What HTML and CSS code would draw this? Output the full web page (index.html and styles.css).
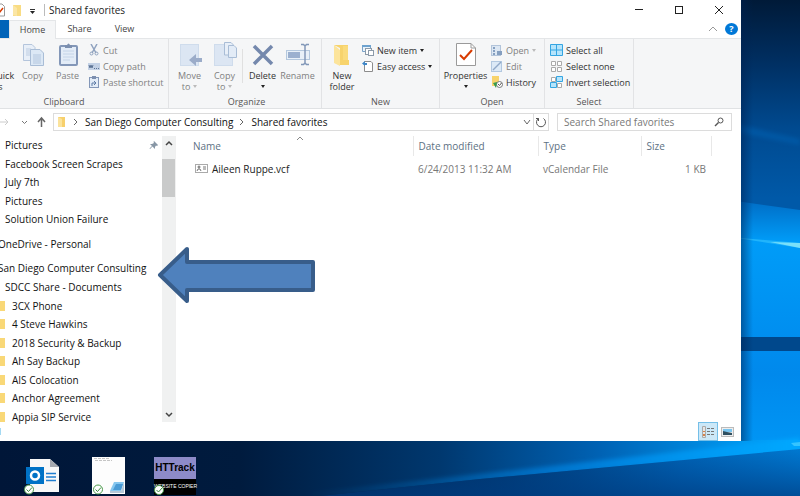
FILE: index.html
```html
<!DOCTYPE html>
<html lang="en">
<head>
<meta charset="utf-8">
<title>Shared favorites</title>
<link rel="stylesheet" href="styles.css">
</head>
<body>
<svg class="wallpaper" viewBox="0 0 800 496" preserveAspectRatio="none" aria-hidden="true">
  <defs>
    <linearGradient id="sky" x1="0" y1="0" x2="0" y2="1">
      <stop offset="0" stop-color="#001a38"/><stop offset=".12" stop-color="#002e60"/>
      <stop offset=".26" stop-color="#004a90"/><stop offset=".4" stop-color="#0059a8"/>
      <stop offset="1" stop-color="#0059a8"/>
    </linearGradient>
    <linearGradient id="glow" x1="0" y1="0" x2="0" y2="1">
      <stop offset="0" stop-color="#0068c0"/><stop offset=".18" stop-color="#009cf8"/>
      <stop offset=".7" stop-color="#0089ec"/><stop offset="1" stop-color="#0096f5"/>
    </linearGradient>
    <linearGradient id="floor" x1="0" y1="0" x2="1" y2="0">
      <stop offset="0" stop-color="#001638"/><stop offset=".3" stop-color="#001b3e"/>
      <stop offset=".55" stop-color="#00386f"/><stop offset=".75" stop-color="#0062b4"/>
      <stop offset=".93" stop-color="#0098f0"/><stop offset="1" stop-color="#00a2ff"/>
    </linearGradient>
    <linearGradient id="under" x1="320" y1="0" x2="800" y2="0" gradientUnits="userSpaceOnUse">
      <stop offset="0" stop-color="#001c40"/><stop offset=".4" stop-color="#003a74"/>
      <stop offset=".75" stop-color="#0062b4"/><stop offset="1" stop-color="#0078d0"/>
    </linearGradient>
    <linearGradient id="beam" x1="300" y1="0" x2="800" y2="0" gradientUnits="userSpaceOnUse">
      <stop offset="0" stop-color="#0078d0" stop-opacity="0"/><stop offset=".5" stop-color="#0088e8" stop-opacity=".6"/>
      <stop offset="1" stop-color="#00a8ff"/>
    </linearGradient>
    <linearGradient id="deep" x1="0" y1="450" x2="0" y2="496" gradientUnits="userSpaceOnUse">
      <stop offset="0" stop-color="#00408a" stop-opacity="0"/><stop offset="1" stop-color="#003c80" stop-opacity=".7"/>
    </linearGradient>
    <linearGradient id="edge" x1="0" y1="0" x2="1" y2="0">
      <stop offset="0" stop-color="#002050" stop-opacity=".5"/><stop offset="1" stop-color="#002050" stop-opacity="0"/>
    </linearGradient>
    <filter id="soft"><feGaussianBlur stdDeviation="2"/></filter>
  </defs>
  <rect width="800" height="496" fill="url(#sky)"/>
  <path d="M700 116L800 139V145L700 125Z" fill="#0069bd" opacity=".4" filter="url(#soft)"/>
  <path d="M700 196L800 210V450H700Z" fill="url(#glow)"/>
  <path d="M730 237L800 243V248Z" fill="#20b4fc"/>
  <path d="M770 242L800 243V248Z" fill="#79e0fa"/>
  <rect x="700" y="337" width="100" height="14" fill="#00488c"/>
  <rect y="440" width="800" height="56" fill="url(#floor)"/>
  <path d="M300 494L800 438V452L320 496Z" fill="url(#beam)" filter="url(#soft)"/>
  <path d="M320 496L480 479L800 449V496Z" fill="url(#under)"/>
  <path d="M320 496L480 479L800 449V496Z" fill="url(#deep)"/>
  <path d="M791 443L800 442V446H794Z" fill="#35c4ff"/>
  <rect x="741" width="12" height="441" fill="url(#edge)"/>
</svg>

<main class="desktop">
<section class="window">
  <header class="titlebar">
    <svg width="40" height="14" viewBox="0 0 40 14" aria-hidden="true">
      <path d="M-4 1H2L4.500 3.500V13H-4" fill="#fff" stroke="#999"/><path d="M-3 8L-1 10L3 5" fill="none" stroke="#d83b01" stroke-width="1.500"/>
      <path d="M13 2H21V13H13Z" fill="#f9dc83"/><path d="M13 2L17 5V13L13 12Z" fill="#fbe6a5"/>
      <path d="M30 6.500H35" stroke="#333"/><path d="M30 8H35L32.500 11Z" fill="#222"/>
    </svg>
    <h1>Shared favorites</h1>
    <div class="controls">
      <button aria-label="Minimize"><svg width="10" height="10"><path d="M1 4.500H9" stroke="#222"/></svg></button>
      <button aria-label="Maximize"><svg width="10" height="10"><rect x="1.500" y="1.500" width="7" height="7" fill="none" stroke="#222"/></svg></button>
      <button aria-label="Close"><svg width="10" height="10"><path d="M1 1L9 9M9 1L1 9" stroke="#222"/></svg></button>
    </div>
  </header>

  <nav class="tabs">
    <button class="file" aria-label="File"></button>
    <button class="active">Home</button>
    <button>Share</button>
    <button>View</button>
    <span class="help">
      <svg width="10" height="8" aria-hidden="true"><path d="M1 6L5 2L9 6" fill="none" stroke="#999"/></svg>
      <button aria-label="Help">?</button>
    </span>
  </nav>

  <div class="ribbon">
    <section class="group clipboard">
      <div class="tools">
        <button class="big on pin"><svg width="24" height="24" aria-hidden="true"></svg>Pin to Quick<br>access</button>
        <button class="big"><svg width="24" height="24" viewBox="0 0 24 24" aria-hidden="true">
          <path d="M2.500 2.500H11L14 5.500V18.500H2.500Z" fill="#e8eff8" stroke="#b4c5dc"/><path d="M5 7H10M5 9H10M5 11H10M5 13H10" stroke="#bdcde2"/>
          <path d="M9.500 7.500H19L22.500 11V23.500H9.500Z" fill="#dce8f5" stroke="#a9bdd6"/><path d="M12 13H20M12 15H20M12 17H20M12 19H20M12 21H20" stroke="#b3c6de"/></svg>Copy</button>
        <button class="big"><svg width="24" height="24" viewBox="0 0 24 24" aria-hidden="true">
          <rect x="4" y="4" width="17" height="19" rx="1" fill="#e3ecf7" stroke="#8397b8" stroke-width="2"/><path d="M9 3H11Q12.500 0 14 3H16V6H9Z" fill="#7c8faf"/><path d="M7 9H18M7 12H18M7 15H18M7 18H14" stroke="#c4d4e8"/></svg>Paste</button>
        <div class="stack">
          <button><svg width="12" height="12" viewBox="0 0 12 12" aria-hidden="true"><path d="M3 0L8 9M9 0L4 9" stroke="#8fa2bf" stroke-width="1.500"/><circle cx="3.500" cy="9.500" r="1.500" fill="none" stroke="#8fa2bf"/><circle cx="8.500" cy="9.500" r="1.500" fill="none" stroke="#8fa2bf"/></svg>Cut</button>
          <button><svg width="12" height="12" viewBox="0 0 12 12" aria-hidden="true"><rect y="3" width="12" height="7" fill="#c3d1e5"/><path d="M1 5L2 8L3 5L4 8L5 5" fill="none" stroke="#5e7596"/><path d="M6 8.500H11" stroke="#5e7596" stroke-dasharray="1 1"/></svg>Copy path</button>
          <button><svg width="12" height="12" viewBox="0 0 12 12" aria-hidden="true"><rect x="1.500" y="1.500" width="9" height="10" fill="#e3ecf7" stroke="#8397b8"/><path d="M4 0H8V3H4Z" fill="#7c8faf"/><path d="M4 10V7H7M6 5L8 7L6 9" fill="none" stroke="#5f7ca6"/></svg>Paste shortcut</button>
        </div>
      </div>
      <h2>Clipboard</h2>
    </section>

    <section class="group organize">
      <div class="tools">
        <button class="big"><svg width="24" height="24" viewBox="0 0 24 24" aria-hidden="true"><rect x="2.500" y="2.500" width="18" height="21" fill="#dce6f3" stroke="#cfdcec"/><path d="M11 18L18 12V16H24V20H18V24Z" fill="#9bacc9"/></svg>Move<span>to <i></i></span></button>
        <button class="big"><svg width="24" height="24" viewBox="0 0 24 24" aria-hidden="true"><rect x="1.500" y="2.500" width="18" height="21" fill="#dce6f3" stroke="#cfdcec"/><path d="M11.500 .5H18L20 2.500V13H11.500Z" fill="#e8eff8" stroke="#a9bdd6"/><path d="M15.500 3.500H21L23.500 6V15.500H15.500Z" fill="#e3ecf7" stroke="#a9bdd6"/></svg>Copy<span>to <i></i></span></button>
        <b class="rule"></b>
        <button class="big on"><svg width="24" height="24" viewBox="0 0 24 24" aria-hidden="true"><path d="M3 4L21 22M21 4L3 22" stroke="#7488ad" stroke-width="3.500"/></svg>Delete<span><i></i></span></button>
        <button class="big"><svg width="26" height="24" viewBox="0 0 26 24" aria-hidden="true"><rect x="1.500" y="8.500" width="23" height="9" fill="#e8f0f8" stroke="#b4c8de"/><rect x="3" y="10" width="12" height="6" fill="#9bb0cf"/><path d="M16 2.500H18.500L20 4L21.500 2.500H24M20 3V22M16 22.500H18.500L20 21L21.500 22.500H24" fill="none" stroke="#8197b8" stroke-width="1.500"/></svg>Rename</button>
      </div>
      <h2>Organize</h2>
    </section>

    <section class="group new">
      <div class="tools">
        <button class="big on"><svg width="24" height="24" viewBox="0 0 24 24" aria-hidden="true"><path d="M4 3H18V18H19V23H10V6L4 3Z" fill="#f7d36c"/><path d="M4 3L10 8V24L4 21Z" fill="#fce49b"/><path d="M13 4H18V18H13Z" fill="#fadb7c"/></svg>New<br>folder</button>
        <div class="stack">
          <button class="on"><svg width="12" height="12" viewBox="0 0 12 12" aria-hidden="true"><path d="M.5 1.500H8.500V7.500H.5Z" fill="#e9f3fb" stroke="#7aa3c8"/><path d="M0 1H9V3H0Z" fill="#6da2cf"/><rect x="3.500" y="4.500" width="6" height="6" fill="#fff" stroke="#8c9aa8"/><rect x="6.500" y="6.500" width="5" height="5" fill="#fff" stroke="#8c9aa8"/></svg>New item <i></i></button>
          <button class="on"><svg width="12" height="12" viewBox="0 0 12 12" aria-hidden="true"><path d="M2.500 1.500H9L10.500 3V11.500H2.500Z" fill="#fff" stroke="#8c8c8c"/><path d="M0 3.500L3 1V3H5V5H3V6Z" fill="#3f87c8"/></svg>Easy access <i></i></button>
        </div>
      </div>
      <h2>New</h2>
    </section>

    <section class="group open">
      <div class="tools">
        <button class="big on"><svg width="24" height="24" viewBox="0 0 24 24" aria-hidden="true"><path d="M2.500 1.500H17L21.500 6V23.500H2.500Z" fill="#fff" stroke="#9a9a9a"/><path d="M17 1.500V6H21.500" fill="none" stroke="#9a9a9a"/><path d="M6 13L10 17L18 8" fill="none" stroke="#d83b01" stroke-width="2"/></svg>Properties<span><i></i></span></button>
        <div class="stack">
          <button><svg width="12" height="12" viewBox="0 0 12 12" aria-hidden="true"><rect x=".5" y="1.500" width="9" height="10" fill="#dce7f3" stroke="#b2c4da"/><path d="M2 3H4V5H2ZM2 6H4V8H2ZM2 9H4V11H2ZM6 7H11V11H6Z" fill="#859fc0"/></svg>Open <i></i></button>
          <button><svg width="12" height="12" viewBox="0 0 12 12" aria-hidden="true"><rect x=".5" y="1.500" width="10" height="10" fill="#dce9f6" stroke="#b2c8e0"/><path d="M2 10L10 2" stroke="#91a9c8" stroke-width="1.500"/></svg>Edit</button>
          <button class="on"><svg width="12" height="12" viewBox="0 0 12 12" aria-hidden="true"><path d="M1 0H8V10H1Z" fill="#f7d36c"/><circle cx="8.500" cy="8.500" r="3" fill="#fff" stroke="#777"/><path d="M7 8L8.500 9.500L10.500 7" fill="none" stroke="#555"/><path d="M2 7L6 6L5 12Z" fill="#349c50"/></svg>History</button>
        </div>
      </div>
      <h2>Open</h2>
    </section>

    <section class="group select">
      <div class="tools">
        <div class="stack">
          <button class="on"><svg width="13" height="12" viewBox="0 0 13 12" aria-hidden="true"><path d="M.5 .5H12.500V11.500H.5ZM6.500 0V12M0 6H13" fill="#b5e4fb" stroke="#34a5e2"/></svg>Select all</button>
          <button class="on"><svg width="13" height="12" viewBox="0 0 13 12" aria-hidden="true"><path d="M1.500 1.500H5.500V5.500H1.500ZM7.500 1.500H11.500V5.500H7.500ZM1.500 7.500H5.500V11.500H1.500ZM7.500 7.500H11.500V11.500H7.500Z" fill="#fff" stroke="#aaa"/></svg>Select none</button>
          <button class="on"><svg width="13" height="12" viewBox="0 0 13 12" aria-hidden="true"><path d="M1.500 1.500H5.500V5.500H1.500ZM7.500 7.500H11.500V11.500H7.500Z" fill="#fff" stroke="#aaa"/><path d="M6.500 .5H12.500V5.500H6.500ZM.5 6.500H6.500V11.500H.5Z" fill="#b5e4fb" stroke="#34a5e2"/></svg>Invert selection</button>
        </div>
      </div>
      <h2>Select</h2>
    </section>
  </div>

  <div class="addressbar">
    <svg width="48" height="12" viewBox="0 0 48 12" aria-hidden="true"><path d="M0 6H8M5 3L8 6L5 9" fill="none" stroke="#ccc"/><path d="M22 5L24.500 7.500L27 5" fill="none" stroke="#777"/><path d="M41.500 11V3M38 6L41.500 2L45 6" fill="none" stroke="#666" stroke-width="1.500"/></svg>
    <div class="path">
      <svg width="10" height="12" viewBox="0 0 10 12" aria-hidden="true"><path d="M1 1H8V11H1Z" fill="#f7d06c"/><path d="M1 1L5 3V11H1Z" fill="#fbe39c"/></svg>
      <svg width="6" height="8" aria-hidden="true"><path d="M1 1L4 4L1 7" fill="none" stroke="#666"/></svg>
      <a href="#">San Diego Computer Consulting</a>
      <svg width="6" height="8" aria-hidden="true"><path d="M1 1L4 4L1 7" fill="none" stroke="#666"/></svg>
      <a href="#">Shared favorites</a>
      <svg class="drop" width="8" height="6" aria-hidden="true"><path d="M1 1L4 5L7 1" fill="none" stroke="#666"/></svg>
    </div>
    <button class="refresh" aria-label="Refresh"><svg width="12" height="12" viewBox="0 0 12 12"><path d="M8.500 2.500A4.500 4.500 0 1 1 3.500 2.500M3.500 5V2.500H1" fill="none" stroke="#555"/></svg></button>
    <label class="search"><input type="search" placeholder="Search Shared favorites" aria-label="Search Shared favorites"><svg width="10" height="10" viewBox="0 0 10 10" aria-hidden="true"><circle cx="6.500" cy="3.500" r="2.500" fill="none" stroke="#555"/><path d="M4.500 5.500L1 9" stroke="#555" stroke-width="1.500"/></svg></label>
  </div>

  <div class="content">
    <nav class="tree">
      <ul>
        <li class="pinned"><a href="#">Pictures</a><svg width="10" height="10" viewBox="0 0 10 10" aria-hidden="true"><path d="M5 1L9 5L8 6L7 5.500L6 7V9L3.500 6.500L1 9L.5 8.500L3 6L1 4H3L5 3L4.500 2Z" fill="#8796a5"/></svg></li>
        <li><a href="#">Facebook Screen Scrapes</a></li>
        <li><a href="#">July 7th</a></li>
        <li><a href="#">Pictures</a></li>
        <li><a href="#">Solution Union Failure</a></li>
        <li class="root"><a href="#">OneDrive - Personal</a></li>
        <li class="root"><a href="#">San Diego Computer Consulting</a></li>
        <li><a href="#">SDCC Share - Documents</a></li>
        <li class="folder"><a href="#">3CX Phone</a></li>
        <li class="folder"><a href="#">4 Steve Hawkins</a></li>
        <li class="folder"><a href="#">2018 Security &amp; Backup</a></li>
        <li class="folder"><a href="#">Ah Say Backup</a></li>
        <li class="folder"><a href="#">AIS Colocation</a></li>
        <li class="folder"><a href="#">Anchor Agreement</a></li>
        <li class="folder"><a href="#">Appia SIP Service</a></li>
      </ul>
      <div class="scroll">
        <svg width="8" height="6" aria-hidden="true"><path d="M1 5L4 2L7 5" fill="none" stroke="#444" stroke-width="1.500"/></svg>
        <div class="thumb"></div>
        <svg width="8" height="6" aria-hidden="true"><path d="M1 1L4 4L7 1" fill="none" stroke="#444" stroke-width="1.500"/></svg>
      </div>
    </nav>
    <div class="files">
      <table>
        <colgroup><col class="c-name"><col class="c-date"><col class="c-type"><col class="c-size"></colgroup>
        <thead><tr><th class="sorted">Name<svg width="8" height="5" aria-hidden="true"><path d="M1 4L4 1L7 4" fill="none" stroke="#888"/></svg></th><th>Date modified</th><th>Type</th><th>Size</th></tr></thead>
        <tbody><tr><td><svg width="13" height="9" viewBox="0 0 13 9" aria-hidden="true"><rect x=".5" y=".5" width="12" height="8" fill="#fff" stroke="#aaa"/><circle cx="4" cy="3" r="1" fill="none" stroke="#666"/><path d="M2 7L3 5H5L6 7M8 3H11M8 5H11" fill="none" stroke="#777"/></svg>Aileen Ruppe.vcf</td><td>6/24/2013 11:32 AM</td><td>vCalendar File</td><td>1 KB</td></tr></tbody>
      </table>
    </div>
  </div>

  <footer class="status">
    <i></i>
    <button class="picked" aria-label="Details view"><svg width="14" height="12" viewBox="0 0 14 12"><path d="M1.500 .5H4.500V11.500H1.500Z" fill="#e6e6e6" stroke="#aaa"/><path d="M6 2.500H9M10 2.500H13M6 5.500H9M10 5.500H13M6 8.500H9M10 8.500H13" stroke="#777"/><path d="M2 5H4V6H2ZM2 8H4V10H2Z" fill="#d5834b"/></svg></button>
    <button aria-label="Large icons"><svg width="13" height="10" viewBox="0 0 13 10"><rect x=".5" y=".5" width="12" height="9" fill="#eee" stroke="#bbb"/><path d="M2 2H11V5H2Z" fill="#79c5ef"/><path d="M2 4L6 5L11 6V8H2Z" fill="#2f4f60"/></svg></button>
  </footer>
  <svg class="arrow" width="160" height="60" viewBox="0 0 160 60" aria-hidden="true"><path d="M4 30L31 4V17H157V45H31V56Z" fill="#4f81bd" stroke="#385d8a" stroke-width="4" stroke-linejoin="round"/></svg>
</section>

<section class="shortcuts">
  <a href="#" aria-label="Outlook document"><svg width="36" height="38" viewBox="0 0 36 38"><path d="M6 2H26L35 10V35H6Z" fill="#f8f8f8"/><path d="M26 2V10H35Z" fill="#a5a9b0"/><path d="M22 16.500H32M22 20H32M22 23.500H32" stroke="#1f7ed0" stroke-width="1.500"/><rect x="2" y="10" width="18" height="17" fill="#0072c6"/><circle cx="11" cy="18.500" r="4" fill="none" stroke="#fff" stroke-width="2.500"/><circle cx="5" cy="32.500" r="4.500" fill="#fff" stroke="#4b9b4b"/><path d="M2.500 32.500L4.500 34.500L8 30.500" fill="none" stroke="#3b8b3f"/></svg></a>
  <a href="#" aria-label="Text document"><svg width="33" height="38" viewBox="0 0 33 38"><path d="M0 0H33V37H0Z" fill="#fdfdfd"/><path d="M2 1.500H18M3 3.500H20" stroke="#c5c5c5" stroke-dasharray="3 1"/><path d="M22 25H32L29 34H18Z" fill="#86c7ef"/><path d="M24 27H31L29 33H21Z" fill="#4a9bd5"/><path d="M18 34H29L32 25V36H18Z" fill="#b5c8d8"/><circle cx="6" cy="32.500" r="4.500" fill="#fff" stroke="#4b9b4b"/><path d="M3.500 32.500L5.500 34.500L9 30.500" fill="none" stroke="#3b8b3f"/></svg></a>
  <a href="#" class="httrack"><strong>HTTrack</strong><small>WEBSITE COPIER</small><svg width="10" height="10" viewBox="0 0 10 10" aria-hidden="true"><circle cx="5" cy="5" r="4.500" fill="#fff" stroke="#4b9b4b"/><path d="M2.500 5L4.500 7L8 3" fill="none" stroke="#3b8b3f"/></svg></a>
</section>
</main>
</body>
</html>
```
FILE: styles.css
```css
* { box-sizing: border-box; }
body { margin: 0; background: #001b3e; color: #222; font: 10px/14px "Open Sans", "Noto Sans", sans-serif; }
button { margin: 0; padding: 0; border: 0; background: none; color: inherit; font: inherit; }
a { color: inherit; text-decoration: none; }
h1, h2 { margin: 0; font-weight: 400; }
svg { flex: none; display: block; }
.wallpaper { position: absolute; inset: 0; width: 100%; height: 100%; }

.desktop { position: relative; min-height: 100vh; display: grid; grid-template-rows: 1fr 55px; overflow: hidden; }
.window { position: relative; margin-right: 59px; background: #fff; display: flex; flex-direction: column; overflow: hidden; }

.titlebar { display: flex; align-items: center; height: 20px; }
.titlebar h1 { margin-left: 4px; padding-left: 4px; border-left: 1px solid #bbb; font-size: 10px; line-height: 12px; }
.controls { margin-left: auto; display: flex; padding-right: 2px; }
.controls button { width: 40px; display: grid; place-items: center; }

.tabs { display: flex; height: 19px; border-bottom: 1px solid #e4e6e8; font-size: 9px; }
.tabs button { width: 47px; height: 18px; color: #444; }
.tabs .file { width: 9px; background: #0063b8; }
.tabs .active { height: 19px; background: #f5f6f7; border: 1px solid #e4e6e8; border-bottom: 0; }
.tabs button:nth-child(4) { width: 43px; }
.help { margin-left: auto; display: flex; align-items: center; gap: 7px; padding-right: 3px; }
.tabs .help button { width: 13px; height: 12px; border-radius: 50%; background: #0078d7; color: #fff; font-weight: 700; line-height: 12px; }

.ribbon { display: flex; height: 70px; background: #f5f6f7; border-bottom: 1px solid #e0e2e4; font-size: 9px; line-height: 11px; }
.group { flex: none; display: flex; flex-direction: column; justify-content: space-between; padding: 3px 0 1px; border-right: 1px solid #e2e3e5; }
.group h2 { text-align: center; font-size: 9px; line-height: 11px; color: #555; }
.tools { display: flex; align-items: flex-start; }
.big { flex: none; display: flex; flex-direction: column; align-items: center; width: 35px; color: #808080; }
.big svg { margin-bottom: 4px; }
.big span, .stack button { display: flex; align-items: center; }
.big span { gap: 3px; min-height: 10px; }
.stack { display: grid; grid-auto-rows: 16px; }
.stack button { gap: 3px; color: #808080; white-space: nowrap; }
.ribbon i { border: 2px solid transparent; border-top: 3px solid #bbb; border-bottom: 0; }
.ribbon .on { color: #333; }
.ribbon .on i { border-top-color: #222; }
.clipboard { width: 209px; margin-left: -40px; }
.clipboard .pin { display: block; width: 76px; margin: 0 -12px 0 -9px; text-align: center; white-space: nowrap; }
.clipboard .stack { margin-left: 3px; }
.organize { width: 153px; padding-left: 3px; }
.rule { width: 1px; height: 34px; margin-top: 7px; background: #e0e0e0; }
.organize .on { margin-left: 2px; }
.new { width: 118px; }
.new .big { width: 40px; }
.open { width: 105px; }
.open .big { width: 51px; }
.select { width: 89px; padding-left: 5px; }
.select h2 { padding-right: 5px; }

.addressbar { display: flex; align-items: center; height: 27px; padding: 4px 9px 5px 0; }
.path { flex: 1; height: 18px; margin-left: 5px; padding: 0 5px 0 3px; display: flex; align-items: center; gap: 6px; border: 1px solid #dcdcdc; white-space: nowrap; }
.path a { color: #111; }
.drop { margin-left: auto; margin-right: -3px; }
.refresh { width: 15px; height: 18px; display: grid; place-items: center; border: 1px solid #dcdcdc; border-left: 0; }
.search { width: 175px; height: 18px; margin-left: 8px; padding: 0 7px 0 6px; display: flex; align-items: center; border: 1px solid #dcdcdc; }
.search input { flex: 1; min-width: 0; padding: 0; border: 0; outline: 0; background: none; font: inherit; }
.search input::placeholder { color: #777; opacity: 1; }

.content { flex: 1; display: flex; min-height: 0; }
.tree { display: flex; width: 176px; border-right: 1px solid #f0f0f0; }
.tree ul { flex: 1; margin: 0 0 -4px; padding: 0; list-style: none; display: flex; flex-direction: column; white-space: nowrap; min-width: 0; }
.tree li { flex: 1; display: flex; align-items: center; padding-left: 5px; color: #111; }
.tree .root { margin-top: 6px; padding-left: 0; margin-left: -2px; }
.folder::before { content: ""; width: 5px; height: 10px; margin: 0 7px 0 -5px; background: #f9d877; }
.pinned svg { margin-left: auto; margin-right: 3px; }
.scroll { width: 13px; display: flex; flex-direction: column; align-items: center; background: #f0f1f1; padding: 4px 0; }
.scroll svg:last-child { margin-top: auto; }
.thumb { width: 13px; height: 38px; margin-top: 13px; background: #c9caca; }
.files { flex: 1; padding-left: 9px; }
table { border-collapse: collapse; table-layout: fixed; width: 526px; max-width: 100%; }
.c-name { width: 228px; } .c-date { width: 125px; } .c-type { width: 103px; } .c-size { width: 70px; }
th { height: 20px; padding: 0 5px; text-align: left; font-weight: 400; color: #5d7183; border-right: 1px solid #e8e8e8; }
th:first-child, td:first-child { padding-left: 8px; }
.sorted { position: relative; }
.sorted svg { position: absolute; top: 0; left: 111px; }
td { height: 26px; padding: 0 5px; color: #777; white-space: nowrap; }
td:first-child { color: #222; }
td svg { display: inline-block; margin: 0 4px 0 2px; }
td:last-child { text-align: right; }

.status { display: flex; align-items: center; justify-content: flex-end; height: 19px; padding-right: 4px; }
.status i { width: 1px; height: 7px; margin-right: auto; background: #a4d9f2; }
.status button { display: grid; place-items: center; width: 19px; height: 19px; }
.status .picked { width: 20px; border: 1px solid #75bfe8; background: #cce8f8; }
.arrow { position: absolute; left: 156px; top: 245px; }

.shortcuts { position: relative; display: flex; align-items: flex-start; gap: 32px; padding: 16px 0 0 24px; }
.shortcuts a:nth-child(2) { margin-right: -3px; }
.httrack { position: relative; width: 42px; height: 38px; background: #000; text-align: center; white-space: nowrap; }
.httrack strong { display: block; height: 22px; background: #8d8bc8; color: #000; font: 700 10px/22px "Liberation Sans Narrow", "Liberation Sans", sans-serif; }
.httrack small { display: block; color: #fff; font: 5px/14px "Liberation Sans Narrow", "Liberation Sans", sans-serif; }
.httrack svg { position: absolute; left: 0; bottom: 0; }
```
